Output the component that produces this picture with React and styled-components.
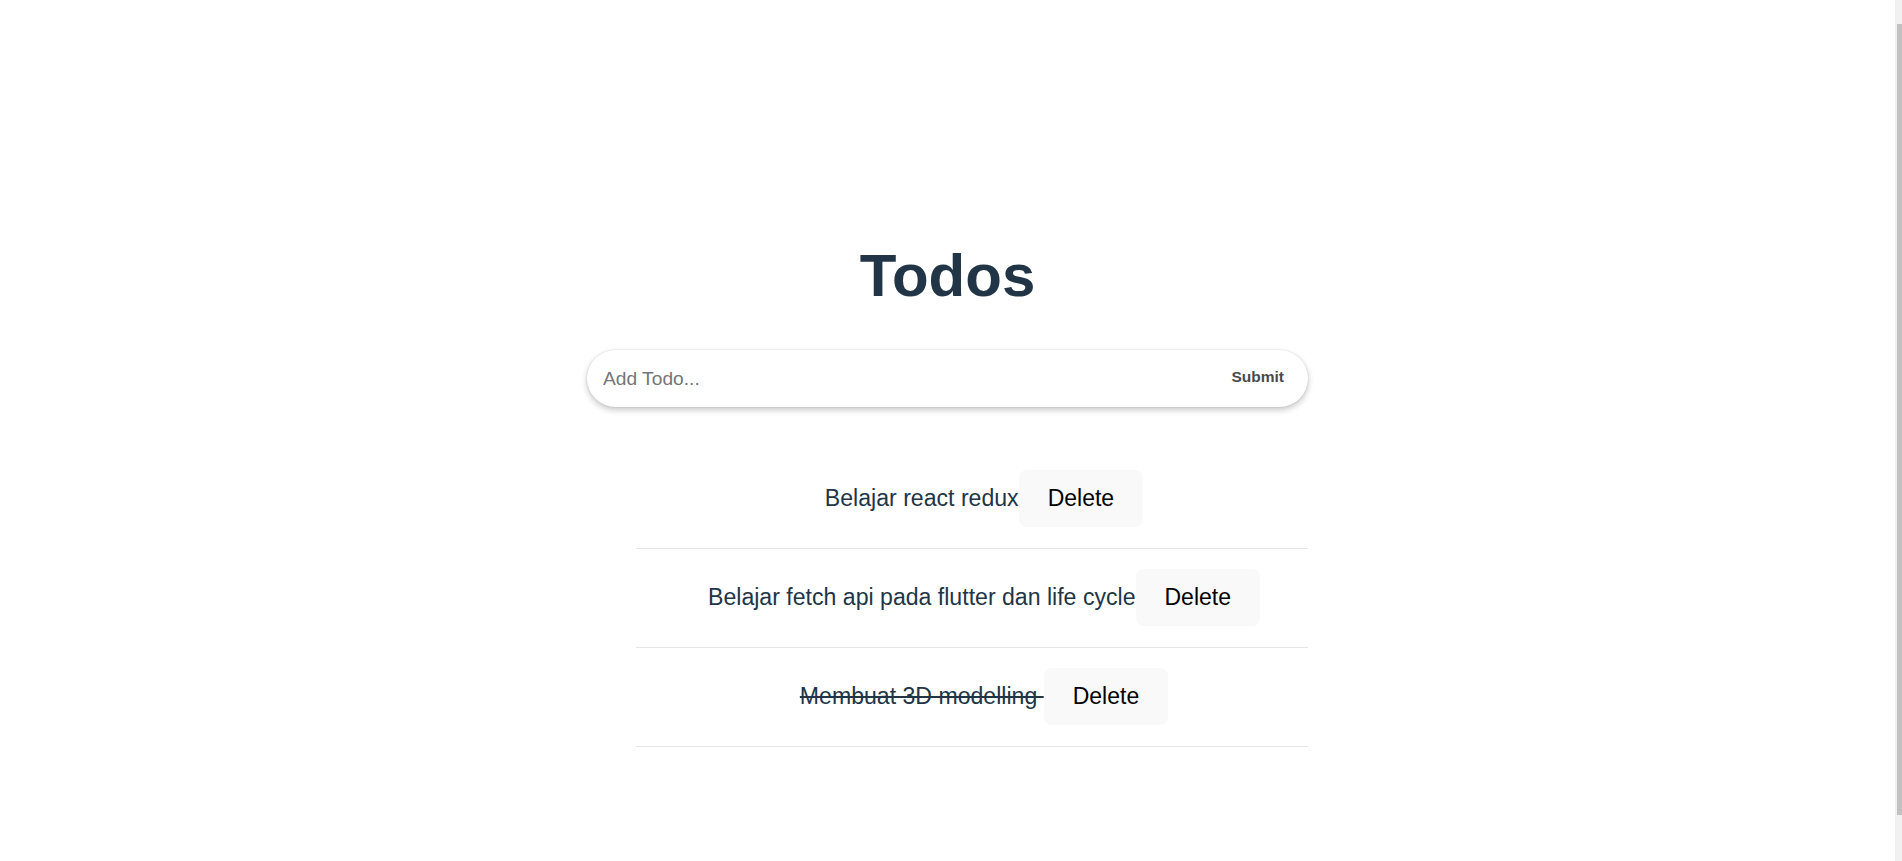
import React, { useState } from "react";
import styled, { createGlobalStyle, css } from "styled-components";

const GlobalStyle = createGlobalStyle`
  html { scrollbar-width: none; }
  html::-webkit-scrollbar { display: none; }
  body {
    margin: 0;
    background: #ffffff;
    font-family: "Liberation Sans", Arial, sans-serif;
    color: #213547;
  }
`;

const Page = styled.main`
  box-sizing: border-box;
  min-height: 884px;
  padding: 243px 7px 0 0;
  display: flex;
  flex-direction: column;
  align-items: center;
`;

const ScrollTrack = styled.div`
  position: fixed;
  top: 0;
  right: 0;
  bottom: 0;
  width: 7px;
  box-sizing: border-box;
  padding: 24px 0 0 2px;
  background: #f1f1f1;
`;

const ScrollThumb = styled.div`
  height: 791px;
  background: #c1c1c1;
`;

const Title = styled.h1`
  margin: 0 0 41px;
  font-size: 60px;
  line-height: 66px;
  font-weight: 700;
  color: #213547;
  text-align: center;
`;

const Form = styled.form`
  box-sizing: border-box;
  width: 721px;
  height: 57px;
  display: flex;
  align-items: center;
  padding: 0 24px 0 16px;
  border-radius: 29px;
  background: #ffffff;
  box-shadow: 0 3px 6px rgba(0, 0, 0, 0.22), 0 0 2px rgba(0, 0, 0, 0.14);
`;

const Input = styled.input`
  flex: 1;
  border: none;
  outline: none;
  background: transparent;
  font-family: "Liberation Sans", Arial, sans-serif;
  font-size: 19.2px;
  color: #213547;
  padding: 0;
  &::placeholder { color: #757575; }
`;

const Submit = styled.button`
  border: none;
  background: none;
  padding: 0 0 4px;
  font-family: "Liberation Sans", Arial, sans-serif;
  font-size: 15.5px;
  font-weight: 700;
  color: #4a4a4a;
  cursor: pointer;
`;

const List = styled.ul`
  box-sizing: border-box;
  width: 721px;
  margin: 43px 0 0;
  padding: 0 0 0 49px;
  list-style: none;
`;

const Item = styled.li`
  display: flex;
  justify-content: center;
  align-items: center;
  padding: 20px 0 21px 24px;
  border-bottom: 1px solid #e5e5e5;
`;

const ItemText = styled.span`
  font-size: 23.1px;
  color: #213547;
  white-space: pre;
  cursor: pointer;
  ${(p) =>
    p.$done &&
    css`
      text-decoration: line-through;
    `}
`;

const DeleteButton = styled.button`
  border: 1px solid transparent;
  border-radius: 8px;
  background: #f9f9f9;
  padding: 10px 28px;
  font-family: "Liberation Sans", Arial, sans-serif;
  font-size: 23px;
  line-height: 35px;
  color: #000000;
  cursor: pointer;
`;

const initialTodos = [
  { id: 1, text: "Belajar react redux", done: false },
  { id: 2, text: "Belajar fetch api pada flutter dan life cycle", done: false },
  { id: 3, text: "Membuat 3D modelling ", done: true },
];

export default function App() {
  const [todos, setTodos] = useState(initialTodos);
  const [value, setValue] = useState("");

  const submit = (e) => {
    e.preventDefault();
    if (!value.trim()) return;
    setTodos([...todos, { id: Date.now(), text: value, done: false }]);
    setValue("");
  };

  return (
    <>
      <GlobalStyle />
      <Page>
        <Title>Todos</Title>
        <Form onSubmit={submit}>
          <Input
            placeholder="Add Todo..."
            value={value}
            onChange={(e) => setValue(e.target.value)}
          />
          <Submit type="submit">Submit</Submit>
        </Form>
        <List>
          {todos.map((t) => (
            <Item key={t.id}>
              <ItemText
                $done={t.done}
                onClick={() =>
                  setTodos(todos.map((x) => (x.id === t.id ? { ...x, done: !x.done } : x)))
                }
              >
                {t.text}
              </ItemText>
              <DeleteButton onClick={() => setTodos(todos.filter((x) => x.id !== t.id))}>
                Delete
              </DeleteButton>
            </Item>
          ))}
        </List>
      </Page>
      <ScrollTrack aria-hidden="true">
        <ScrollThumb />
      </ScrollTrack>
    </>
  );
}
